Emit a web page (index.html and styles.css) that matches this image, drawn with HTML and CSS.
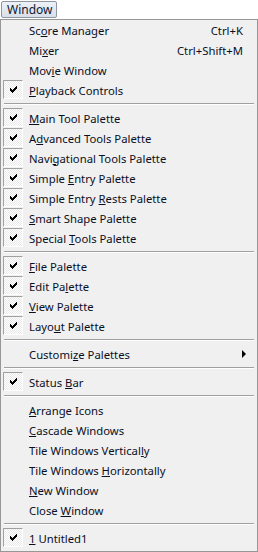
FILE: index.html
```html
<!DOCTYPE html>
<html>
<head>
<meta charset="utf-8">
<link rel="stylesheet" href="styles.css">
</head>
<body>
<div class="bar"><span class="btn">Window</span></div>
<div class="menu">
  <div class="item"><span class="cell"></span><span class="label">Sc<u>o</u>re Manager</span><span class="key">Ctrl+K</span></div>
  <div class="item"><span class="cell"></span><span class="label">Mi<u>x</u>er</span><span class="key">Ctrl+Shift+M</span></div>
  <div class="item"><span class="cell"></span><span class="label">Mov<u>i</u>e Window</span><span class="key"></span></div>
  <div class="item"><span class="cell chk"><svg width="7" height="7" viewBox="0 0 7 7"><path d="M0 2h1v3H0zM1 3h1v3H1zM2 4h1v3H2zM3 3h1v3H3zM4 2h1v3H4zM5 1h1v3H5zM6 0h1v3H6z"/></svg></span><span class="label"><u>P</u>layback Controls</span><span class="key"></span></div>
  <div class="sep"></div>
  <div class="item"><span class="cell chk"><svg width="7" height="7" viewBox="0 0 7 7"><path d="M0 2h1v3H0zM1 3h1v3H1zM2 4h1v3H2zM3 3h1v3H3zM4 2h1v3H4zM5 1h1v3H5zM6 0h1v3H6z"/></svg></span><span class="label"><u>M</u>ain Tool Palette</span><span class="key"></span></div>
  <div class="item"><span class="cell chk"><svg width="7" height="7" viewBox="0 0 7 7"><path d="M0 2h1v3H0zM1 3h1v3H1zM2 4h1v3H2zM3 3h1v3H3zM4 2h1v3H4zM5 1h1v3H5zM6 0h1v3H6z"/></svg></span><span class="label">A<u>d</u>vanced Tools Palette</span><span class="key"></span></div>
  <div class="item"><span class="cell chk"><svg width="7" height="7" viewBox="0 0 7 7"><path d="M0 2h1v3H0zM1 3h1v3H1zM2 4h1v3H2zM3 3h1v3H3zM4 2h1v3H4zM5 1h1v3H5zM6 0h1v3H6z"/></svg></span><span class="label">Navi<u>g</u>ational Tools Palette</span><span class="key"></span></div>
  <div class="item"><span class="cell chk"><svg width="7" height="7" viewBox="0 0 7 7"><path d="M0 2h1v3H0zM1 3h1v3H1zM2 4h1v3H2zM3 3h1v3H3zM4 2h1v3H4zM5 1h1v3H5zM6 0h1v3H6z"/></svg></span><span class="label">Simple <u>E</u>ntry Palette</span><span class="key"></span></div>
  <div class="item"><span class="cell chk"><svg width="7" height="7" viewBox="0 0 7 7"><path d="M0 2h1v3H0zM1 3h1v3H1zM2 4h1v3H2zM3 3h1v3H3zM4 2h1v3H4zM5 1h1v3H5zM6 0h1v3H6z"/></svg></span><span class="label">Simple Entry <u>R</u>ests Palette</span><span class="key"></span></div>
  <div class="item"><span class="cell chk"><svg width="7" height="7" viewBox="0 0 7 7"><path d="M0 2h1v3H0zM1 3h1v3H1zM2 4h1v3H2zM3 3h1v3H3zM4 2h1v3H4zM5 1h1v3H5zM6 0h1v3H6z"/></svg></span><span class="label"><u>S</u>mart Shape Palette</span><span class="key"></span></div>
  <div class="item"><span class="cell chk"><svg width="7" height="7" viewBox="0 0 7 7"><path d="M0 2h1v3H0zM1 3h1v3H1zM2 4h1v3H2zM3 3h1v3H3zM4 2h1v3H4zM5 1h1v3H5zM6 0h1v3H6z"/></svg></span><span class="label">Special <u>T</u>ools Palette</span><span class="key"></span></div>
  <div class="sep"></div>
  <div class="item"><span class="cell chk"><svg width="7" height="7" viewBox="0 0 7 7"><path d="M0 2h1v3H0zM1 3h1v3H1zM2 4h1v3H2zM3 3h1v3H3zM4 2h1v3H4zM5 1h1v3H5zM6 0h1v3H6z"/></svg></span><span class="label"><u>F</u>ile Palette</span><span class="key"></span></div>
  <div class="item"><span class="cell chk"><svg width="7" height="7" viewBox="0 0 7 7"><path d="M0 2h1v3H0zM1 3h1v3H1zM2 4h1v3H2zM3 3h1v3H3zM4 2h1v3H4zM5 1h1v3H5zM6 0h1v3H6z"/></svg></span><span class="label">Edit Pa<u>l</u>ette</span><span class="key"></span></div>
  <div class="item"><span class="cell chk"><svg width="7" height="7" viewBox="0 0 7 7"><path d="M0 2h1v3H0zM1 3h1v3H1zM2 4h1v3H2zM3 3h1v3H3zM4 2h1v3H4zM5 1h1v3H5zM6 0h1v3H6z"/></svg></span><span class="label"><u>V</u>iew Palette</span><span class="key"></span></div>
  <div class="item"><span class="cell chk"><svg width="7" height="7" viewBox="0 0 7 7"><path d="M0 2h1v3H0zM1 3h1v3H1zM2 4h1v3H2zM3 3h1v3H3zM4 2h1v3H4zM5 1h1v3H5zM6 0h1v3H6z"/></svg></span><span class="label">Layo<u>u</u>t Palette</span><span class="key"></span></div>
  <div class="sep"></div>
  <div class="item"><span class="cell"></span><span class="label">Customi<u>z</u>e Palettes</span><span class="key"><span class="arrow"></span></span></div>
  <div class="sep"></div>
  <div class="item"><span class="cell chk"><svg width="7" height="7" viewBox="0 0 7 7"><path d="M0 2h1v3H0zM1 3h1v3H1zM2 4h1v3H2zM3 3h1v3H3zM4 2h1v3H4zM5 1h1v3H5zM6 0h1v3H6z"/></svg></span><span class="label">Status <u>B</u>ar</span><span class="key"></span></div>
  <div class="sep"></div>
  <div class="item"><span class="cell"></span><span class="label"><u>A</u>rrange Icons</span><span class="key"></span></div>
  <div class="item"><span class="cell"></span><span class="label"><u>C</u>ascade Windows</span><span class="key"></span></div>
  <div class="item"><span class="cell"></span><span class="label">Tile Windows Vertical<u>l</u>y</span><span class="key"></span></div>
  <div class="item"><span class="cell"></span><span class="label">Tile Windows <u>H</u>orizontally</span><span class="key"></span></div>
  <div class="item"><span class="cell"></span><span class="label"><u>N</u>ew Window</span><span class="key"></span></div>
  <div class="item"><span class="cell"></span><span class="label">Close <u>W</u>indow</span><span class="key"></span></div>
  <div class="sep"></div>
  <div class="item"><span class="cell chk"><svg width="7" height="7" viewBox="0 0 7 7"><path d="M0 2h1v3H0zM1 3h1v3H1zM2 4h1v3H2zM3 3h1v3H3zM4 2h1v3H4zM5 1h1v3H5zM6 0h1v3H6z"/></svg></span><span class="label"><u>1</u> Untitled1</span><span class="key"></span></div>
</div>
</body>
</html>
```
FILE: styles.css
```css
html, body {
  margin: 0;
  padding: 0;
  background: #ffffff;
}
body {
  font-family: "Noto Sans", "Open Sans", sans-serif;
  font-size: 11.3px;
  color: #000000;
  width: 258px;
}
.bar {
  height: 19px;
  padding: 1px 0 0 1px;
  box-sizing: border-box;
}
.btn {
  display: inline-block;
  box-sizing: border-box;
  width: 56px;
  height: 17px;
  line-height: 15px;
  padding-left: 5px;
  border: 1px solid #8e95a3;
  border-radius: 2px;
  background: linear-gradient(#eef1f6, #d9dfe9);
  font-size: 12px;
  color: #0d1a33;
}
.menu {
  box-sizing: border-box;
  width: 258px;
  border: 1px solid #979797;
  background: #f0f0f0;
  padding: 0 1px 3px 1px;
}
.item {
  display: grid;
  grid-template-columns: 20px 1fr auto;
  column-gap: 6px;
  height: 20px;
  align-items: center;
  padding-left: 1px;
  padding-right: 13px;
  color: #0a0f1f;
}
.item u {
  text-underline-offset: 1px;
}
.cell {
  height: 19px;
  align-self: start;
}
.chk {
  box-sizing: border-box;
  display: flex;
  align-items: center;
  justify-content: center;
  border-top: 1px solid #a0a0a0;
  border-left: 1px solid #a0a0a0;
  border-right: 1px solid #ffffff;
  border-bottom: 1px solid #ffffff;
  background-color: #ffffff;
  background-image: repeating-conic-gradient(#e8e8e8 0 25%, #ffffff 0 50%);
  background-size: 2px 2px;
}
.chk svg {
  display: block;
  fill: #000000;
  shape-rendering: crispEdges;
  margin-left: 1px;
}
.key {
  text-align: right;
  display: flex;
  justify-content: flex-end;
  align-items: center;
}
.arrow {
  width: 0;
  height: 0;
  border-top: 4px solid transparent;
  border-bottom: 4px solid transparent;
  border-left: 4px solid #000000;
  margin-right: -3px;
}
.sep {
  height: 8px;
  box-sizing: border-box;
  padding-top: 3px;
  margin: 0 2px 0 2px;
}
.sep::before {
  content: "";
  display: block;
  height: 1px;
  border-top: 1px solid #a0a0a0;
  background: #ffffff;
}
```
